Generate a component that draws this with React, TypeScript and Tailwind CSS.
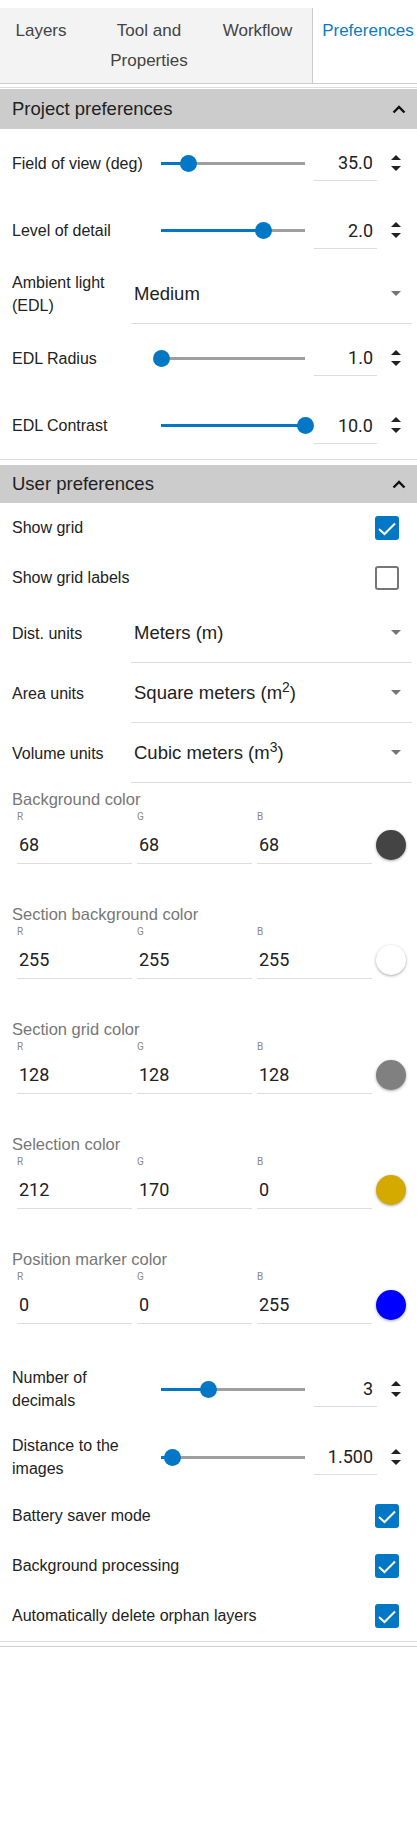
import React from "react";

const sans = "font-['Liberation_Sans',Arial,sans-serif]";
const roboto = "font-['Roboto',Arial,sans-serif]";

const Chevron = () => (
  <svg width="14" height="9" viewBox="0 0 14 9">
    <polyline points="1.5,7.5 7,2 12.5,7.5" fill="none" stroke="#111" strokeWidth="2.4" />
  </svg>
);

const Spinner = () => (
  <svg width="10" height="17" viewBox="0 0 10 17">
    <polygon points="0,5 5,0 10,5" fill="#222" />
    <polygon points="0,11 10,11 5,16" fill="#222" />
  </svg>
);

const Caret = () => (
  <svg width="10" height="5" viewBox="0 0 10 5">
    <polygon points="0,0 10,0 5,5" fill="#757575" />
  </svg>
);

const Header = ({ title, h }: { title: string; h: string }) => (
  <div className={`flex items-center justify-between bg-[#cccccc] pl-3 pr-[11px] ${h}`}>
    <span className="text-[18.5px] text-[#222]">{title}</span>
    <Chevron />
  </div>
);

const Slider = ({ frac }: { frac: number }) => (
  <div className="relative h-[17px] w-[144px] shrink-0">
    <div className="absolute left-0 right-0 top-[7px] h-[3px] bg-[#9e9e9e]" />
    <div className="absolute left-0 top-[7px] h-[3px] bg-[#0277c6]" style={{ width: `${frac * 144}px` }} />
    <div
      className="absolute top-0 h-[17px] w-[17px] rounded-full bg-[#0277c6]"
      style={{ left: `${frac * 144 - 8.5}px` }}
    />
  </div>
);

const SliderRow = ({ label, value, frac, h }: { label: string; value: string; frac: number; h: string }) => (
  <div className={`flex items-center pl-3 ${h}`}>
    <div className="w-[136px] shrink-0 text-[16px] leading-[23px] text-[#222]">{label}</div>
    <div className="ml-[13px]">
      <Slider frac={frac} />
    </div>
    <div
      className={`ml-[9px] flex h-[36px] w-[63px] items-center justify-end border-b border-[#dddddd] pr-[4px] text-[18px] text-[#222] ${roboto}`}
    >
      {value}
    </div>
    <div className="ml-[14px] flex items-center">
      <Spinner />
    </div>
  </div>
);

const SelectRow = ({ label, value, h }: { label: React.ReactNode; value: React.ReactNode; h: string }) => (
  <div className={`flex items-center pl-3 pr-[5px] ${h}`}>
    <div className="w-[119px] shrink-0 text-[16px] leading-[23px] text-[#222]">{label}</div>
    <div className="flex h-full flex-1 items-center justify-between border-b border-[#dddddd] pl-[3px] pr-[11px]">
      <span className="text-[18.5px] text-[#222]">{value}</span>
      <Caret />
    </div>
  </div>
);

const CheckRow = ({ label, checked }: { label: string; checked: boolean }) => (
  <div className="flex h-[50px] items-center justify-between pl-3 pr-[18px]">
    <span className="text-[16px] text-[#222]">{label}</span>
    {checked ? (
      <div className="flex h-[24px] w-[24px] items-center justify-center rounded-[3px] bg-[#0277c6]">
        <svg width="24" height="24" viewBox="0 0 24 24">
          <polyline points="4,13 9.5,18 20,7.5" fill="none" stroke="#fff" strokeWidth="2" />
        </svg>
      </div>
    ) : (
      <div className="h-[24px] w-[24px] rounded-[3px] border-2 border-[#767676] bg-white" />
    )}
  </div>
);

const ColorGroup = ({
  label,
  rgb,
  swatch,
  pb,
}: {
  label: string;
  rgb: [number, number, number];
  swatch: string;
  pb: string;
}) => (
  <div className={`pt-[6px] ${pb}`}>
    <div className="pl-3 text-[16.5px] leading-[20px] text-[#777]">{label}</div>
    <div className="mt-[2px] flex items-end pl-[17px]">
      {["R", "G", "B"].map((c, i) => (
        <div key={c} className={`w-[115px] ${i > 0 ? "ml-[5px]" : ""}`}>
          <div className={`text-[10px] leading-[12px] text-[#888] ${roboto}`}>{c}</div>
          <div
            className={`mt-[3px] flex h-[38px] items-center border-b border-[#dddddd] pl-[2px] text-[18px] text-[#222] ${roboto}`}
          >
            {rgb[i]}
          </div>
        </div>
      ))}
      <div className="mb-[4px] ml-[4px] h-[30px] w-[30px] rounded-full shadow-[0_1px_3px_rgba(0,0,0,0.35)]" style={{ backgroundColor: swatch }} />
    </div>
  </div>
);

export default function App() {
  return (
    <div className={`w-[417px] min-h-[1827px] bg-white ${sans}`}>
      <div className="pt-2">
        <div className="flex h-[76px] border-b border-[#cccccc] bg-[#f3f3f3] text-[17px] leading-[30px] text-[#444]">
          <div className="w-[82px] pt-[8px] text-center">Layers</div>
          <div className="w-[134px] pt-[8px] text-center">Tool and Properties</div>
          <div className="w-[96px] pr-[13px] pt-[8px] text-center">Workflow</div>
          <div className="flex-1 border-l border-[#cccccc] bg-white pl-[6px] pt-[8px] text-center text-[#0a7bc8]">
            Preferences
          </div>
        </div>
      </div>

      <div className="mt-[3px] border-t border-[#dddddd] pt-[1px]">
        <div className="border-b border-[#dddddd]">
          <Header title="Project preferences" h="h-[40px]" />
          <SliderRow label="Field of view (deg)" value="35.0" frac={0.19} h="h-[68px]" />
          <SliderRow label="Level of detail" value="2.0" frac={0.715} h="h-[67px]" />
          <SelectRow label="Ambient light (EDL)" value="Medium" h="h-[60px]" />
          <SliderRow label="EDL Radius" value="1.0" frac={0} h="h-[68px]" />
          <SliderRow label="EDL Contrast" value="10.0" frac={1} h="h-[67px]" />
        </div>

        <div className="mt-[5px] border-b border-[#dddddd]">
          <Header title="User preferences" h="h-[38px]" />
          <CheckRow label="Show grid" checked />
          <CheckRow label="Show grid labels" checked={false} />
          <SelectRow label="Dist. units" value="Meters (m)" h="h-[60px]" />
          <SelectRow
            label="Area units"
            value={
              <>
                Square meters (m<sup>2</sup>)
              </>
            }
            h="h-[60px]"
          />
          <SelectRow
            label="Volume units"
            value={
              <>
                Cubic meters (m<sup>3</sup>)
              </>
            }
            h="h-[60px]"
          />
          <ColorGroup label="Background color" rgb={[68, 68, 68]} swatch="#444444" pb="pb-[34px]" />
          <ColorGroup label="Section background color" rgb={[255, 255, 255]} swatch="#ffffff" pb="pb-[34px]" />
          <ColorGroup label="Section grid color" rgb={[128, 128, 128]} swatch="#808080" pb="pb-[34px]" />
          <ColorGroup label="Selection color" rgb={[212, 170, 0]} swatch="#d4aa00" pb="pb-[34px]" />
          <ColorGroup label="Position marker color" rgb={[0, 0, 255]} swatch="#0000ff" pb="pb-[31px]" />
          <SliderRow label="Number of decimals" value="3" frac={0.333} h="h-[68px]" />
          <SliderRow label="Distance to the images" value="1.500" frac={0.083} h="h-[68px]" />
          <CheckRow label="Battery saver mode" checked />
          <CheckRow label="Background processing" checked />
          <CheckRow label="Automatically delete orphan layers" checked />
        </div>
        <div className="mt-[4px] border-t border-[#d0d0d0]" />
      </div>
    </div>
  );
}
